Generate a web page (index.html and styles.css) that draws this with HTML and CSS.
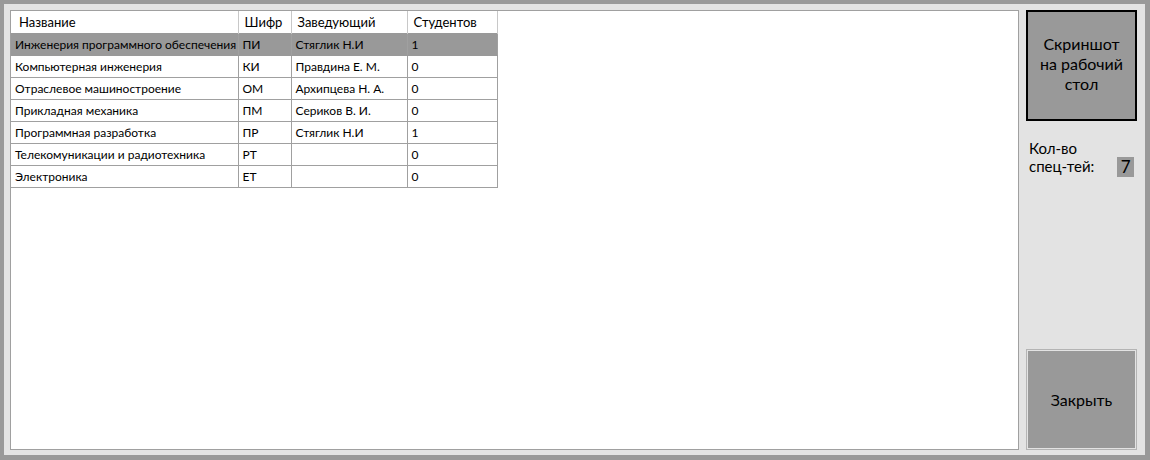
FILE: index.html
```html
<!DOCTYPE html>
<html lang="ru">
<head>
<meta charset="utf-8">
<title>Специальности</title>
<link rel="stylesheet" href="styles.css">
</head>
<body>
<div class="window">
  <div class="grid-panel">
    <table class="grid">
      <colgroup>
        <col class="c1"><col class="c2"><col class="c3"><col class="c4">
      </colgroup>
      <thead>
        <tr><th>Название</th><th>Шифр</th><th>Заведующий</th><th>Студентов</th></tr>
      </thead>
      <tbody>
        <tr class="selected"><td>Инженерия программного обеспечения</td><td>ПИ</td><td>Стяглик Н.И</td><td>1</td></tr>
        <tr><td>Компьютерная инженерия</td><td>КИ</td><td>Правдина Е. М.</td><td>0</td></tr>
        <tr><td>Отраслевое машиностроение</td><td>ОМ</td><td>Архипцева Н. А.</td><td>0</td></tr>
        <tr><td>Прикладная механика</td><td>ПМ</td><td>Сериков В. И.</td><td>0</td></tr>
        <tr><td>Программная разработка</td><td>ПР</td><td>Стяглик Н.И</td><td>1</td></tr>
        <tr><td>Телекомуникации и радиотехника</td><td>РТ</td><td></td><td>0</td></tr>
        <tr><td>Электроника</td><td>ЕТ</td><td></td><td>0</td></tr>
      </tbody>
    </table>
  </div>
  <div class="side">
    <button class="btn btn-default">Скриншот на рабочий стол</button>
    <div class="count">
      <div class="count-label">Кол-во<br>спец-тей:</div>
      <div class="count-value">7</div>
    </div>
    <div class="spacer"></div>
    <button class="btn btn-close">Закрыть</button>
  </div>
</div>
</body>
</html>
```
FILE: styles.css
```css
html, body {
  margin: 0;
  padding: 0;
}
body {
  font-family: "Lato", "DejaVu Sans", sans-serif;
  color: #000;
}
.window {
  width: 1150px;
  height: 460px;
  box-sizing: border-box;
  border-style: solid;
  border-color: #999999;
  border-width: 4px 5px 5px 4px;
  background: #e3e3e3;
  padding: 6px 8px 5px 6px;
  display: flex;
  gap: 7px;
}
.grid-panel {
  width: 1009px;
  height: 440px;
  box-sizing: border-box;
  border: 1px solid #a0a0a0;
  background: #fff;
}
.grid {
  border-collapse: collapse;
  table-layout: fixed;
  width: 486px;
  font-size: 12px;
}
.c1 { width: 227px; }
.c2 { width: 53px; }
.c3 { width: 116px; }
.c4 { width: 90px; }
.grid th {
  height: 22px;
  box-sizing: border-box;
  padding: 0 0 0 6px;
  font-weight: normal;
  font-size: 13px;
  text-align: left;
  border-left: 1px solid #c8c8c8;
  border-right: 1px solid #c8c8c8;
  white-space: nowrap;
  overflow: hidden;
}
.grid th:first-child { border-left: none; padding-left: 8px; }
.grid td {
  height: 22px;
  padding: 0 0 0 4px;
  border: 1px solid #a0a0a0;
  white-space: nowrap;
  overflow: hidden;
  box-sizing: border-box;
}
.grid td:first-child { border-left: none; }
.grid tr.selected td {
  background: #999999;
  border-color: #999999;
  border-right-color: #a0a0a0;
}
.side {
  width: 111px;
  display: flex;
  flex-direction: column;
}
.btn {
  font-family: inherit;
  color: #000;
  background: #999999;
  width: 111px;
  padding: 0;
  cursor: pointer;
  text-align: center;
}
.btn-default {
  height: 111px;
  border: 2px solid #000;
  font-size: 16px;
  line-height: 20px;
  padding: 0 6px 4px;
}
.count {
  margin-top: 18px;
  padding-left: 3px;
  display: flex;
  align-items: flex-end;
  gap: 23px;
  font-size: 15px;
  line-height: 18px;
}
.count-value {
  background: #999999;
  width: 17px;
  height: 20px;
  line-height: 20px;
  text-align: center;
  font-size: 17px;
  margin-bottom: -2px;
}
.spacer { flex: 1; }
.btn-close {
  height: 101px;
  border: 1px solid #b4b4b4;
  box-shadow: inset 0 0 0 1px #e3e3e3;
  font-size: 16px;
}
```
